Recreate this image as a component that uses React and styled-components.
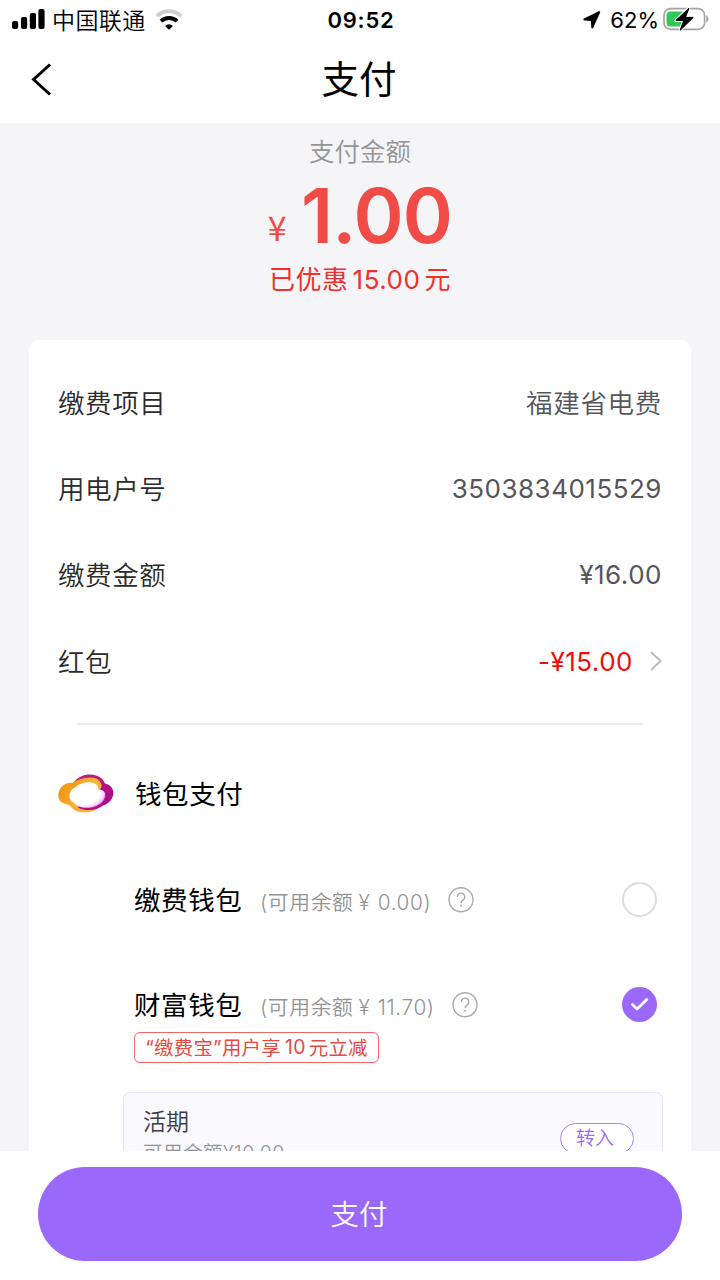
import styled, { createGlobalStyle } from 'styled-components';

const GlobalStyle = createGlobalStyle`
  * {
    box-sizing: border-box;
  }

  body {
    margin: 0;
    background: #fff;
    font-family: Inter, 'Noto Sans CJK SC', sans-serif;
  }

  button {
    font-family: inherit;
    padding: 0;
    cursor: pointer;
  }
`;

const Screen = styled.div`
  width: 720px;
  height: 1280px;
  display: flex;
  flex-direction: column;
  overflow: hidden;
  background: #f5f5f8;
`;

const StatusBar = styled.div`
  flex: none;
  height: 40px;
  padding: 0 10px 0 12px;
  display: grid;
  grid-template-columns: 1fr auto 1fr;
  align-items: center;
  background: #fff;
  font-size: 22px;
  color: #000;
`;

const StatusGroup = styled.div`
  display: flex;
  align-items: center;
  justify-content: ${({ $end }) => ($end ? 'flex-end' : 'flex-start')};
`;

const Carrier = styled.span`
  margin: 0 9px 2px 7px;
  font-size: 23px;
  font-weight: 350;
  letter-spacing: 0.4px;
`;

const Clock = styled.span`
  font-weight: 600;
  letter-spacing: 0.8px;
`;

const Percent = styled.span`
  margin: 0 4px 0 9px;
`;

const NavBar = styled.header`
  flex: none;
  height: 83px;
  padding: 0 30px 4px;
  display: grid;
  grid-template-columns: 1fr auto 1fr;
  align-items: center;
  background: #fff;
`;

const BackButton = styled.button`
  width: 24px;
  height: 34px;
  display: flex;
  border: 0;
  background: none;
`;

const Title = styled.h1`
  margin: 0 2px 0 0;
  font-size: 37.5px;
  font-weight: 400;
  line-height: 50px;
  color: #000;
`;

const Content = styled.main`
  flex: 1;
  min-height: 0;
  overflow: hidden;
`;

const Summary = styled.section`
  height: 217px;
  padding-top: 11px;
  display: flex;
  flex-direction: column;
  align-items: center;
`;

const SummaryLabel = styled.div`
  font-size: 25.5px;
  font-weight: 350;
  line-height: 36px;
  color: #949494;
`;

const Amount = styled.div`
  display: flex;
  height: 90px;
  line-height: 90px;
  font-size: 76px;
  font-weight: 600;
  letter-spacing: -0.8px;
  color: #f04b47;
`;

const Currency = styled.span`
  margin: 12px 15px 0 0;
  font-family: 'Noto Sans CJK SC', sans-serif;
  font-size: 34px;
  font-weight: 400;
`;

const Discount = styled.div`
  margin-top: 2px;
  font-size: 26px;
  font-weight: 400;
  line-height: 36px;
  letter-spacing: 0.5px;
  color: #f0302c;
`;

const DiscountValue = styled.span`
  margin: 0 4px;
`;

const Card = styled.section`
  width: 662px;
  height: 1000px;
  margin: 0 auto;
  padding: 19px 29px 0;
  border-radius: 10px;
  background: #fff;
`;

const Row = styled.div`
  height: 86.4px;
  display: flex;
  align-items: center;
  justify-content: space-between;
  font-size: 26px;
`;

const RowLabel = styled.span`
  margin-bottom: 2px;
  font-size: 26.5px;
  font-weight: 350;
  letter-spacing: 0.6px;
  color: #2b2b2b;
`;

const RowValue = styled.span`
  margin-bottom: ${({ $text }) => ($text ? 2 : 0)}px;
  display: flex;
  align-items: center;
  gap: 17px;
  font-size: ${({ $text }) => ($text ? 26.5 : 26)}px;
  font-weight: ${({ $text }) => ($text ? 350 : 400)};
  letter-spacing: ${({ $text }) => ($text ? 0.7 : 0.5)}px;
  color: ${({ $red }) => ($red ? '#f00d0d' : '#55555c')};
`;

const Divider = styled.hr`
  width: 566px;
  height: 2px;
  margin: 18px auto 0;
  border: 0;
  background: #ececef;
`;

const WalletHeader = styled.div`
  height: 54px;
  margin-top: 41px;
  display: flex;
  align-items: center;
  gap: 21px;
  font-size: 26.5px;
  letter-spacing: 0.6px;
  color: #000;
`;

const Option = styled.div`
  height: 50px;
  margin-top: ${({ $top }) => $top}px;
  padding: 0 5px 0 76px;
  display: flex;
  align-items: center;
`;

const OptionName = styled.span`
  width: 126px;
  margin-bottom: 2px;
  font-size: 26.5px;
  letter-spacing: 0.6px;
  color: #000;
`;

const Balance = styled.span`
  margin: 2px 17px 0 0;
  font-size: 20.8px;
  font-weight: 350;
  letter-spacing: 0.6px;
  white-space: pre;
  color: #949494;
`;

const Yuan = styled.span`
  margin: 0 1px 0 5px;
`;

const Radio = styled.span`
  width: 35px;
  height: 35px;
  margin-left: auto;
  display: flex;
  align-items: center;
  justify-content: center;
  border-radius: 50%;
  border: ${({ $checked }) => ($checked ? '0' : '2px solid #dcdcdc')};
  background: ${({ $checked }) => ($checked ? '#9a68fb' : '#fff')};
`;

const Tag = styled.div`
  width: 245px;
  height: 31px;
  margin: 2px 0 0 76px;
  padding-bottom: 1px;
  display: flex;
  align-items: center;
  justify-content: center;
  border: 1.5px solid #ee6663;
  border-radius: 6px;
  font-size: 19.4px;
  letter-spacing: 0.3px;
  white-space: nowrap;
  color: #e64a45;
`;

const TagNumber = styled.span`
  margin: 0 3px 0 4px;
`;

const AccountBox = styled.div`
  width: 540px;
  height: 110px;
  margin: 29px 0 0 65px;
  padding: 12px 28px 0 19px;
  display: flex;
  justify-content: space-between;
  border: 1px solid #e6e2f8;
  border-radius: 7px;
  background: #f9f9fe;
`;

const AccountName = styled.div`
  font-size: 23px;
  font-weight: 350;
  line-height: 34px;
  color: #3c3c42;
`;

const AccountBalance = styled.div`
  font-size: 19.5px;
  font-weight: 350;
  line-height: 28px;
  letter-spacing: 0.5px;
  color: #949494;
`;

const TransferButton = styled.button`
  width: 74px;
  height: 31px;
  margin-top: 18px;
  padding: 1px 4px 0 0;
  border: 1.5px solid #a985f0;
  border-radius: 16px;
  background: #fff;
  font-size: 19px;
  font-weight: 350;
  line-height: 28px;
  color: #9a68fb;
`;

const Footer = styled.footer`
  flex: none;
  height: 129px;
  padding: 16px 38px 0;
  background: #fff;
`;

const PayButton = styled.button`
  width: 644px;
  height: 94px;
  padding: 0 2px 3px 0;
  border: 0;
  border-radius: 47px;
  background: #9a68fb;
  font-size: 28.5px;
  font-weight: 350;
  color: #fff;
`;

const SignalIcon = () => (
  <svg width="33" height="24" viewBox="0 0 33 24">
    <rect x="0" y="13" width="6.2" height="8" rx="2" />
    <rect x="9" y="9" width="6.2" height="12" rx="2" />
    <rect x="17.8" y="5" width="6.2" height="16" rx="2" />
    <rect x="26.4" y="1" width="6.2" height="20" rx="2" />
  </svg>
);

const WifiIcon = () => (
  <svg width="28" height="24" viewBox="0 0 28 24">
    <path d="M1.9 8.1a17.4 17.4 0 0 1 24.2 0" fill="none" stroke="#cfcfcf" strokeWidth="4" />
    <path d="M6 13.2a11.6 11.6 0 0 1 16 0" fill="none" stroke="#000" strokeWidth="3.9" />
    <path d="M14 21.8l-3.9-3.9a6 6 0 0 1 7.8 0z" />
  </svg>
);

const LocationIcon = () => (
  <svg width="18" height="18" viewBox="0 0 18 18">
    <path d="M16.2 1.2L1.4 8.4l7.4.7.5 7.3z" stroke="#000" strokeWidth="2" strokeLinejoin="round" />
  </svg>
);

const BatteryIcon = () => (
  <svg width="47" height="28" viewBox="0 0 47 28">
    <rect x="1" y="2.7" width="40.6" height="20.6" rx="6.5" fill="#fff" stroke="#a5a5a5" strokeWidth="1.7" />
    <path d="M43.3 9.3c2.8 1 2.8 6.4 0 7.4z" fill="#a5a5a5" />
    <path d="M7.5 5.4H22v15.2H7.5a4 4 0 0 1-4-4V9.4a4 4 0 0 1 4-4z" fill="#34c759" />
    <path
      d="M26 2.2L12.9 14.4h7.8l-3.5 9.8 13-12.8h-7.8z"
      fill="#000"
      stroke="#fff"
      strokeWidth="3"
      paintOrder="stroke"
      strokeLinejoin="round"
    />
    <path d="M26 2.2L12.9 14.4h7.8l-3.5 9.8 13-12.8h-7.8z" stroke="#000" strokeWidth="1" strokeLinejoin="round" />
  </svg>
);

const BackIcon = () => (
  <svg width="24" height="34" viewBox="0 0 24 34">
    <path d="M20 1.5L3.6 16.5 20 31.5" fill="none" stroke="#000" strokeWidth="3" />
  </svg>
);

const ChevronIcon = () => (
  <svg width="12" height="20" viewBox="0 0 12 20">
    <path d="M1 1l9.6 9L1 19" fill="none" stroke="#bbb" strokeWidth="2" />
  </svg>
);

const HelpIcon = () => (
  <svg width="26" height="26" viewBox="0 0 26 26" fill="none" stroke="#aaa" strokeWidth="1.4">
    <circle cx="13" cy="12.7" r="12" />
    <path d="M9.4 9.9a3.7 3.7 0 1 1 5.8 3c-1.4 1-2.1 1.6-2.1 3.3" />
    <circle cx="13.1" cy="18.8" r="1" fill="#aaa" stroke="none" />
  </svg>
);

const CheckIcon = () => (
  <svg width="19" height="15" viewBox="0 0 19 15">
    <path d="M2.5 7.6L7 12l9.8-9.5" fill="none" stroke="#fff" strokeWidth="2.8" strokeLinecap="round" strokeLinejoin="round" />
  </svg>
);

const WalletLogo = () => (
  <svg width="56" height="38" viewBox="0 0 56 38" overflow="visible">
    <defs>
      <linearGradient id="logoOrange" x1="0" y1="0" x2="1" y2="0.3">
        <stop offset="0" stopColor="#f08c10" />
        <stop offset="0.5" stopColor="#fbac2a" />
        <stop offset="1" stopColor="#fbb53a" />
      </linearGradient>
      <linearGradient id="logoPurple" x1="0" y1="0" x2="1" y2="0.6">
        <stop offset="0" stopColor="#c0227a" />
        <stop offset="1" stopColor="#b0088a" />
      </linearGradient>
      <radialGradient id="logoCore" cx="0.4" cy="0.42" r="0.64">
        <stop offset="0.68" stopColor="#fff" />
        <stop offset="0.86" stopColor="#fadcf9" />
        <stop offset="1" stopColor="#d97fdc" />
      </radialGradient>
    </defs>
    <path
      d="M0.3 21.5C.3 14 7 7.500 15.700 9L30 12l6 19 4 3.500c-4.500 2.700-8.500 4-14.500 3.900-5-.1-9-1.400-11.500-4.400-1.700-2-3-3.200-5.500-3.700C3.500 29.200.3 26 .3 21.500z"
      fill="url(#logoOrange)"
    />
    <path
      d="M16 8C20 3 26 .3 32.5.5 39 .7 45 4 47 9.500c5 1 8.500 5 8.300 9.500-.3 6-4 10.500-10.300 12.500-6.500 5-17 6.300-25 2L24 12z"
      fill="url(#logoPurple)"
    />
    <path d="M13 10C19 5.500 26 3 33 3.500c6.500.4 11 3.500 10.500 9.500L40 18H14z" fill="url(#logoOrange)" />
    <path
      d="M17 13.500C20.500 10 25.500 8.300 31 8.300c5.500 0 9.300 2.300 9.500 7.200 4.500 0 7 2.500 6.700 6-.5 6-6.200 11-14.200 12-7.500 1-14.500-.5-17-4.700-3-1.200-4.700-3.700-4.500-7.300.2-3.700 2.300-6.700 5.500-8z"
      fill="url(#logoCore)"
    />
  </svg>
);

const wallets = [
  { name: '缴费钱包', balance: '0.00', top: 55, checked: false },
  { name: '财富钱包', balance: '11.70', top: 55, checked: true },
];

const App = () => (
  <>
    <GlobalStyle />
    <Screen>
      <StatusBar>
        <StatusGroup>
          <SignalIcon />
          <Carrier>中国联通</Carrier>
          <WifiIcon />
        </StatusGroup>
        <Clock>09:52</Clock>
        <StatusGroup $end>
          <LocationIcon />
          <Percent>62%</Percent>
          <BatteryIcon />
        </StatusGroup>
      </StatusBar>

      <NavBar>
        <BackButton aria-label="返回">
          <BackIcon />
        </BackButton>
        <Title>支付</Title>
      </NavBar>

      <Content>
        <Summary>
          <SummaryLabel>支付金额</SummaryLabel>
          <Amount>
            <Currency>¥</Currency>1.00
          </Amount>
          <Discount>
            已优惠<DiscountValue>15.00</DiscountValue>元
          </Discount>
        </Summary>

        <Card>
          <Row>
            <RowLabel>缴费项目</RowLabel>
            <RowValue $text>福建省电费</RowValue>
          </Row>
          <Row>
            <RowLabel>用电户号</RowLabel>
            <RowValue>3503834015529</RowValue>
          </Row>
          <Row>
            <RowLabel>缴费金额</RowLabel>
            <RowValue>¥16.00</RowValue>
          </Row>
          <Row>
            <RowLabel>红包</RowLabel>
            <RowValue $red>
              -¥15.00
              <ChevronIcon />
            </RowValue>
          </Row>
          <Divider />

          <WalletHeader>
            <WalletLogo />
            钱包支付
          </WalletHeader>
          {wallets.map(({ name, balance, top, checked }) => (
            <Option key={name} $top={top}>
              <OptionName>{name}</OptionName>
              <Balance>
                (可用余额<Yuan>¥</Yuan> {balance})
              </Balance>
              <HelpIcon />
              <Radio $checked={checked}>{checked && <CheckIcon />}</Radio>
            </Option>
          ))}
          <Tag>
            “缴费宝”用户享<TagNumber>10</TagNumber>元立减
          </Tag>

          <AccountBox>
            <div>
              <AccountName>活期</AccountName>
              <AccountBalance>可用余额¥10.00</AccountBalance>
            </div>
            <TransferButton>转入</TransferButton>
          </AccountBox>
        </Card>
      </Content>

      <Footer>
        <PayButton>支付</PayButton>
      </Footer>
    </Screen>
  </>
);

export default App;
